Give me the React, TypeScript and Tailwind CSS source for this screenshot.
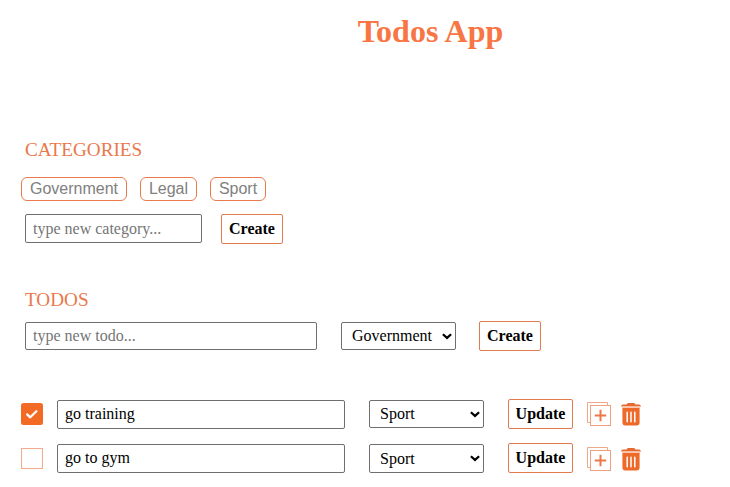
import { useState } from "react";

const CATEGORIES = ["Government", "Legal", "Sport"];

const field =
  "h-[29px] rounded-[2px] border border-[#6f6f6f] bg-white pl-[7px] text-[16px] leading-[18px] outline-none placeholder:text-[#757575]";
const button =
  "h-[30px] shrink-0 rounded-[2px] border border-[#e07b50] bg-white text-center text-[16px] font-bold leading-[18px] text-black";

function Select({ value, className }: { value: string; className: string }) {
  return (
    <div className={`relative w-[115px] shrink-0 ${className}`}>
      <select
        defaultValue={value}
        className="block h-full w-full appearance-none rounded-[2px] border border-[#6f6f6f] bg-white pl-[10px] text-[16px] leading-[18px] text-black outline-none"
      >
        {CATEGORIES.map((c) => (
          <option key={c}>{c}</option>
        ))}
      </select>
      <svg
        className="pointer-events-none absolute top-[11px] right-[4px]"
        width="10"
        height="7"
        viewBox="0 0 10 7"
        fill="none"
        stroke="#000"
        strokeWidth="2.2"
      >
        <path d="M.9 1.2 5 4.9l4.1-3.7" />
      </svg>
    </div>
  );
}

function Checkbox({ checked }: { checked: boolean }) {
  return checked ? (
    <svg width="22" height="22" viewBox="0 0 22 22">
      <rect width="22" height="22" rx="2.5" fill="#f36a24" />
      <path
        d="m6.2 11.4 3 2.9 6.2-6.1"
        fill="none"
        stroke="#fff"
        strokeWidth="2.3"
        strokeLinecap="round"
        strokeLinejoin="round"
      />
    </svg>
  ) : (
    <svg width="22" height="22" viewBox="0 0 22 22">
      <rect x="0.5" y="0.5" width="21" height="20" fill="none" stroke="#f3ad8e" strokeWidth="1.1" />
    </svg>
  );
}

function DuplicateIcon() {
  return (
    <svg width="24" height="24" viewBox="0 0 24 24" fill="none">
      <path d="M3.5 20.5h-3V.5h20v3" stroke="#efa98a" />
      <rect x="3.5" y="3.5" width="20" height="20" stroke="#efa07d" />
      <path d="M13.5 7.8v11.4M7.8 13.5h11.4" stroke="#ec7848" strokeWidth="2" />
    </svg>
  );
}

function TrashIcon() {
  return (
    <svg width="20" height="24" viewBox="0 0 20 24">
      <path
        d="M5.5 2.4Q6.3 1 7.7 1h4.6q1.4 0 2.2 1.4h3.6q1.6 0 1.9 2.1H0q.3-2.1 1.9-2.1z"
        fill="#e6692f"
      />
      <path d="M1 4.5h18v1.6H1z" fill="#f9c9af" />
      <path d="M1.4 6.1h17.2v14.4q0 3-3 3H4.4q-3 0-3-3z" fill="#ee6a2b" />
      <path d="M6.2 10.2v9.6M10 10.2v9.6M13.8 10.2v9.6" stroke="#fff" strokeWidth="1.5" strokeLinecap="round" />
    </svg>
  );
}

function TodoRow({ text, done }: { text: string; done: boolean }) {
  const [value, setValue] = useState(text);
  return (
    <li className="flex h-[30px] items-start pl-[21px]">
      <span className={done ? "w-[36px] pt-[4px]" : "w-[36px] pt-[5px]"}>
        <Checkbox checked={done} />
      </span>
      <input
        className={`${field} mt-px w-[288px] pb-[2px]`}
        value={value}
        onChange={(e) => setValue(e.target.value)}
      />
      <Select value="Sport" className={done ? "mt-px ml-6 h-[28px]" : "mt-px ml-6 h-[29px]"} />
      <button className={`${button} ml-6 w-[65px]`}>Update</button>
      <span className={done ? "ml-[14px] pt-[3px]" : "ml-[14px] pt-[4px]"}>
        <DuplicateIcon />
      </span>
      <span className={done ? "ml-[10px] pt-[3px]" : "ml-[10px] pt-[4px]"}>
        <TrashIcon />
      </span>
    </li>
  );
}

export default function App() {
  return (
    <main className="h-[487px] w-[730px] overflow-hidden bg-white font-['Liberation_Serif',serif] text-black [&_svg]:block">
      <h1 className="ml-[131px] h-[139px] pt-[13px] text-center text-[32px] font-bold leading-[37px] text-[#f87644]">
        Todos App
      </h1>

      <section className="h-[150px]">
        <h2 className="pl-[25px] text-[19.2px] leading-[21px] text-[#ea784b]">CATEGORIES</h2>
        <ul className="mt-[17px] flex gap-[13px] pl-[21px] font-['Liberation_Sans',sans-serif] text-[16px] leading-[22px] text-[#808080]">
          <li className="h-[24px] w-[106px] rounded-[6px] border border-[#e87a4d] text-center">Government</li>
          <li className="h-[24px] w-[57px] rounded-[6px] border border-[#e87a4d] text-center">Legal</li>
          <li className="h-[24px] w-[56px] rounded-[6px] border border-[#e87a4d] text-center">Sport</li>
        </ul>
        <div className="mt-[13px] flex items-start gap-[19px] pl-[25px]">
          <input className={`${field} w-[177px]`} placeholder="type new category..." />
          <button className={`${button} w-[62px]`}>Create</button>
        </div>
      </section>

      <section>
        <h2 className="pl-[25px] text-[19.2px] leading-[21px] text-[#ea784b]">TODOS</h2>
        <div className="mt-[11px] flex items-center pl-[25px]">
          <input
            className="h-[28px] w-[292px] rounded-[2px] border border-[#6f6f6f] bg-white pl-[7px] text-[16px] leading-[18px] outline-none placeholder:text-[#757575]"
            placeholder="type new todo..."
          />
          <Select value="Government" className="ml-6 h-[28px]" />
          <button className={`${button} ml-[23px] w-[62px]`}>Create</button>
        </div>
        <ul className="mt-[48px] flex flex-col gap-[14px]">
          <TodoRow text="go training" done />
          <TodoRow text="go to gym" done={false} />
        </ul>
      </section>
    </main>
  );
}
